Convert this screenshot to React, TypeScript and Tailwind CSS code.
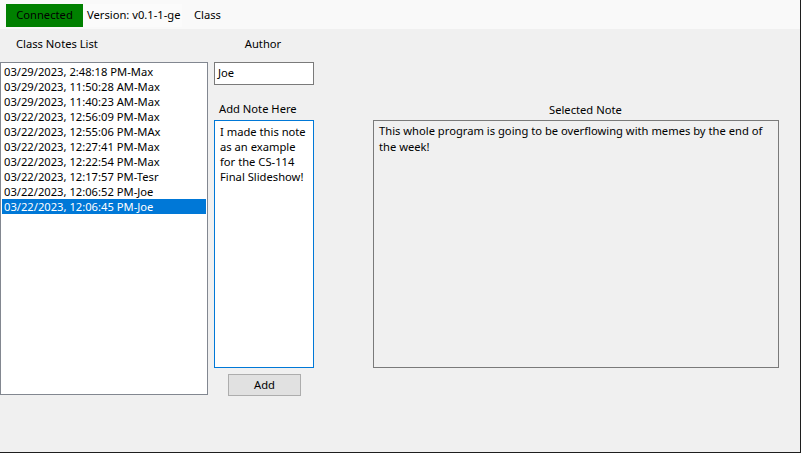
import React from "react";

const notes = [
  "03/29/2023, 2:48:18 PM-Max",
  "03/29/2023, 11:50:28 AM-Max",
  "03/29/2023, 11:40:23 AM-Max",
  "03/22/2023, 12:56:09 PM-Max",
  "03/22/2023, 12:55:06 PM-MAx",
  "03/22/2023, 12:27:41 PM-Max",
  "03/22/2023, 12:22:54 PM-Max",
  "03/22/2023, 12:17:57 PM-Tesr",
  "03/22/2023, 12:06:52 PM-Joe",
  "03/22/2023, 12:06:45 PM-Joe",
];

export default function App() {
  return (
    <div className="w-[801px] h-[453px] bg-[#f0f0f0] border-r border-b border-[#1e1e1e] flex flex-col font-['Noto_Sans',sans-serif] text-[11.2px] text-black overflow-hidden">
      {/* status strip */}
      <div className="h-[29px] shrink-0 bg-[#f9f9f9] flex items-center pl-[6px] pt-[2px] whitespace-nowrap">
        <div className="h-[23px] w-[77px] bg-[#008000] flex items-center justify-center">Connected</div>
        <div className="h-[23px] w-[99px] bg-[#fbfbfb] flex items-center pl-[4px]">Version: v0.1-1-ge</div>
        <div className="ml-[12px]">Class</div>
      </div>

      <div className="flex">
        {/* notes list */}
        <div className="w-[208px] flex flex-col">
          <div className="h-[33px] flex items-center pl-[16px] pb-[2px]">Class Notes List</div>
          <div className="h-[333px] bg-white border border-[#828790] p-[1px] whitespace-nowrap">
            {notes.map((n, i) => (
              <div
                key={i}
                className={
                  i === notes.length - 1
                    ? "h-[15px] leading-[15px] pl-[2px] bg-[#0078d7] text-white"
                    : "h-[15px] leading-[15px] pl-[2px]"
                }
              >
                {n}
              </div>
            ))}
          </div>
        </div>

        {/* author + new note */}
        <div className="w-[100px] ml-[6px] flex flex-col">
          <div className="h-[33px] flex items-center justify-center pr-[2px] pb-[2px]">Author</div>
          <div className="h-[23px] bg-white border border-[#7a7a7a] flex items-center pl-[3px]">Joe</div>
          <div className="h-[35px] flex items-end pb-[2px] pl-[5px]">Add Note Here</div>
          <div className="h-[248px] bg-white border border-[#0078d7] pl-[5px] pr-[2px] pt-[3px] leading-[15px]">
            I made this note as an example for the CS-114 Final Slideshow!
          </div>
          <button className="mt-[6px] ml-[14px] w-[73px] h-[22px] bg-[#e1e1e1] border border-[#adadad] flex items-center justify-center">
            Add
          </button>
        </div>

        {/* selected note */}
        <div className="w-[406px] ml-[59px] flex flex-col">
          <div className="h-[68px]" />
          <div className="h-[23px] flex items-end pb-[1px] pl-[176px]">Selected Note</div>
          <div className="h-[248px] border border-[#7a7a7a] pl-[5px] pr-[8px] pt-[2px] leading-[16px]">
            This whole program is going to be overflowing with memes by the end of the week!
          </div>
        </div>
      </div>
    </div>
  );
}
